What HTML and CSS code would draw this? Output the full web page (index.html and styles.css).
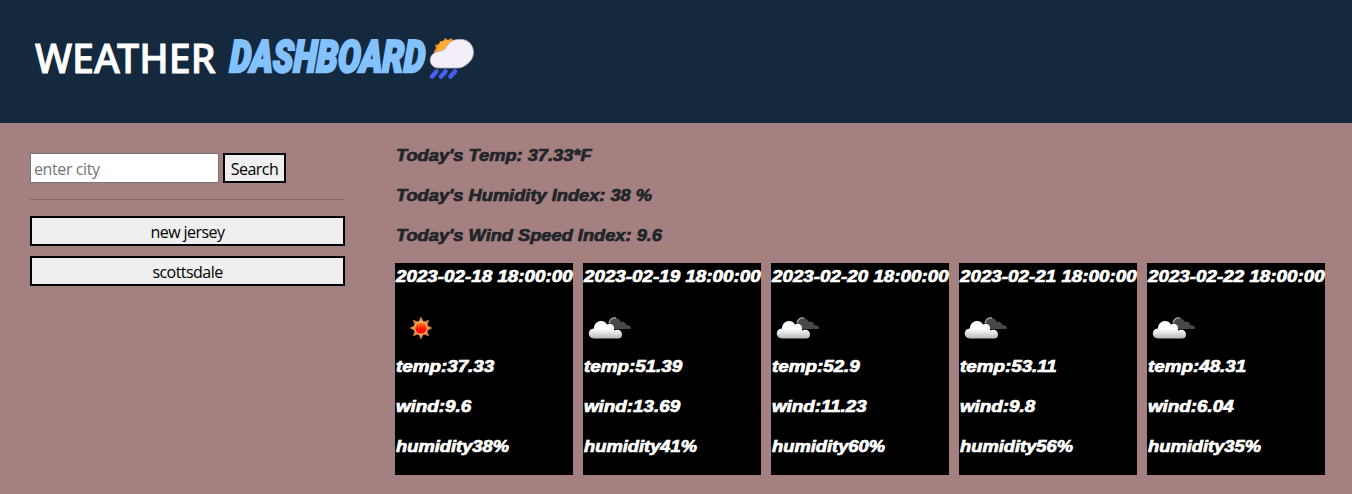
FILE: index.html
```
<!DOCTYPE html>
<html lang="en">
<head>
<meta charset="utf-8">
<title>Weather Dashboard</title>
<link rel="stylesheet" href="styles.css">
</head>
<body>
<svg class="defs" width="0" height="0" aria-hidden="true">
  <defs>
    <linearGradient id="cloudFill" x1="0" y1="0" x2="0" y2="1"><stop offset=".45" stop-color="#fff"/><stop offset="1" stop-color="#b8b8b8"/></linearGradient>
    <linearGradient id="sunFill" x1="0" y1="0" x2="0" y2="1"><stop offset="0" stop-color="#ff9a30"/><stop offset=".55" stop-color="#ff1a00"/><stop offset="1" stop-color="#f00"/></linearGradient>
    <symbol id="cloudy" viewBox="0 0 50 50">
      <path d="M24 25C24 18 26 15 30 15c3 0 5 2 6 4 3-1 5 1 5 3 3 0 5 1 5 3 0 1-1 1-2 1H28z" fill="#484848"/>
      <path d="M24 20c1-4 4-5.500 7-5" fill="none" stroke="#aaa" stroke-width="1.300"/>
      <path d="M9 35.500c-7 0-7-10 0-10 0-8 10-10 13-4 4-2 8 1 7 6 4-2 8 0 8 4 0 3-2 4-4 4z" fill="url(#cloudFill)"/>
    </symbol>
    <symbol id="sunny" viewBox="0 0 50 50">
      <path d="M25 13.500l2.600 5.200 5.600-2-2 5.600 5.300 2.700-5.300 2.700 2 5.600-5.600-2L25 36.500l-2.600-5.200-5.600 2 2-5.600-5.300-2.700 5.300-2.700-2-5.600 5.600 2z" fill="#dc8a3c"/>
      <circle cx="25" cy="25" r="6.300" fill="url(#sunFill)" stroke="#ffd08a" stroke-width="1"/>
    </symbol>
  </defs>
</svg>
<header class="banner">
  <h1 class="title">
    <span class="title-main"><span class="title-text">WEATHER</span></span>
    <span class="title-accent"><span class="condensed">DASHBOARD</span></span>
    <svg class="logo" viewBox="0 0 50 50">
      <path d="M8 25l-1-4 2-3-1-3 4-1 1-3 3 0 2-3 3 2 3-2 2 2 4 0 2 4-8 10z" fill="#f58220"/>
      <circle cx="20" cy="20" r="10" fill="#ffad33"/>
      <path d="M12 38C1 38 0 24 11 21.500c5-1 6-1 8-4C23 10 29 9 35 9.500c12 1 15 16 7 23-5 4.500-8 5.500-12 5.500z" fill="#f3eef8" stroke="#b9abc8" stroke-width=".8"/>
      <path d="M9.500 41.500l-4.500 5M18.500 41.500l-4.500 5M28 41.500l-4.500 5" stroke="#4460f0" stroke-width="4.500" stroke-linecap="round"/>
    </svg>
  </h1>
</header>
<main class="page">
  <aside class="sidebar">
    <form class="search"><input class="city" type="text" placeholder="enter city"><button class="btn" type="button">Search</button></form>
    <hr class="rule">
    <div class="history"><button class="btn">new jersey</button><button class="btn">scottsdale</button></div>
  </aside>
  <section class="weather">
    <div class="today">
      <p><span class="wide">Today's Temp: 37.33*F</span></p>
      <p><span class="wide">Today's Humidity Index: 38 %</span></p>
      <p><span class="wide">Today's Wind Speed Index: 9.6</span></p>
    </div>
    <div class="forecast">
      <article class="card"><p><span class="wide">2023-02-18 18:00:00</span></p><svg class="icon"><use href="#sunny"/></svg><p><span class="wide">temp:37.33</span></p><p><span class="wide">wind:9.6</span></p><p class="humidity"><span class="wide">humidity38%</span></p></article>
      <article class="card"><p><span class="wide">2023-02-19 18:00:00</span></p><svg class="icon cloud"><use href="#cloudy"/></svg><p><span class="wide">temp:51.39</span></p><p><span class="wide">wind:13.69</span></p><p class="humidity"><span class="wide">humidity41%</span></p></article>
      <article class="card"><p><span class="wide">2023-02-20 18:00:00</span></p><svg class="icon cloud"><use href="#cloudy"/></svg><p><span class="wide">temp:52.9</span></p><p><span class="wide">wind:11.23</span></p><p class="humidity"><span class="wide">humidity60%</span></p></article>
      <article class="card"><p><span class="wide">2023-02-21 18:00:00</span></p><svg class="icon cloud"><use href="#cloudy"/></svg><p><span class="wide">temp:53.11</span></p><p><span class="wide">wind:9.8</span></p><p class="humidity"><span class="wide">humidity56%</span></p></article>
      <article class="card"><p><span class="wide">2023-02-22 18:00:00</span></p><svg class="icon cloud"><use href="#cloudy"/></svg><p><span class="wide">temp:48.31</span></p><p><span class="wide">wind:6.04</span></p><p class="humidity"><span class="wide">humidity35%</span></p></article>
    </div>
  </section>
</main>
</body>
</html>
```
FILE: styles.css
```
* { box-sizing: border-box; }
body { margin: 0; min-height: 494px; background: #a58080; color: #212529; font: 16px/24px "Open Sans", sans-serif; overflow: hidden; }
.defs { position: absolute; }
.banner { height: 123px; padding: 33px 35px; background: #14293d; }
.title { display: flex; margin: 0; height: 48px; font-size: 40px; line-height: 48px; font-weight: 500; color: #fff; }
.title-main { width: 195px; padding-top: 1px; font-family: "Noto Sans", sans-serif; white-space: nowrap; }
.title-text { display: inline-block; transform: scaleX(.985); transform-origin: left; -webkit-text-stroke: .9px #fff; }
.title-accent { width: 195px; color: #84c1ff; font: italic 900 44.500px/48px Roboto, sans-serif; }
.condensed { display: inline-block; transform: scaleX(.76) skewX(-3deg); transform-origin: left; -webkit-text-stroke: 2.500px #84c1ff; }
.logo { width: 50px; height: 50px; margin-left: 2px; margin-top: -3px; flex: none; }
.page { display: grid; grid-template-columns: 315px 930px; gap: 50px; padding: 20px 30px; }
.sidebar { padding-top: 10px; }
.search { display: flex; gap: 4px; height: 30px; }
.city { width: 189px; height: 30px; padding: 2px 3px 0; border: 1px solid #767676; background: #fff; font: 16px "Open Sans", sans-serif; letter-spacing: -.4px; }
.city::placeholder { color: #757575; }
.btn { height: 30px; padding: 1px 6px 0; border: 2px solid #000; background: #efefef; color: #000; font: 16px/24px "Open Sans", sans-serif; letter-spacing: -.55px; white-space: nowrap; }
.search .btn { width: 63px; padding: 1px 0 0; }
.rule { margin: 16px 0; border: 0; height: 1px; background: #886669; }
.history { display: grid; gap: 10px; }
.weather { font: italic bold 16px/24px "Liberation Sans", Arial, sans-serif; }
p { margin: 0 0 16px; padding: 1px 0 0 1px; height: 24px; }
.wide { display: inline-block; transform: scaleX(1.175); transform-origin: left; white-space: nowrap; -webkit-text-stroke: .7px currentColor; }
.today .wide { transform: scaleX(1.14); }
.humidity .wide { transform: scaleX(1.145); }
.forecast { display: flex; gap: 10px; }
.card { width: 178px; height: 212px; padding-top: 1px; background: #000; color: #fff; }
.icon { display: block; width: 50px; height: 50px; margin: -1px 0 1px 1px; }
.cloud { margin-left: 2px; }
```
